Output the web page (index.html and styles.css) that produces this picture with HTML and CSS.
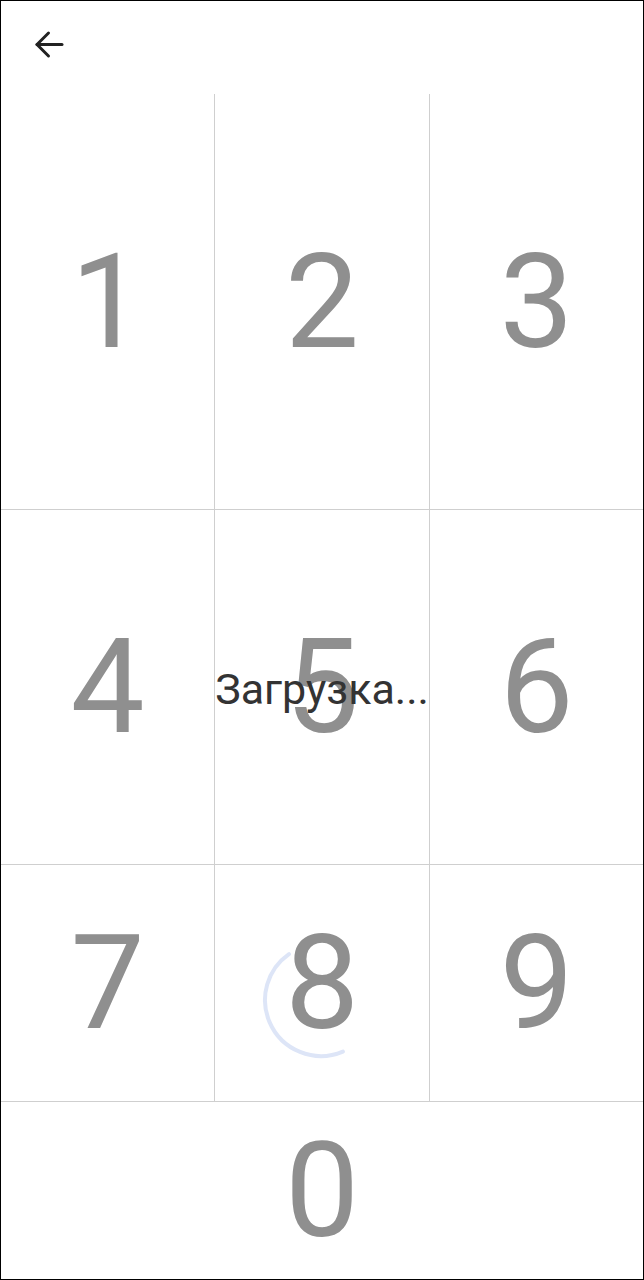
FILE: index.html
```html
<!DOCTYPE html>
<html lang="ru">
<head>
<meta charset="utf-8">
<link rel="stylesheet" href="styles.css">
</head>
<body>
<div class="screen">
  <header class="header">
    <button class="back" aria-label="Назад">
      <svg width="32" height="32" viewBox="0 0 32 32" fill="none" stroke="#222" stroke-width="3" stroke-linecap="round" stroke-linejoin="round">
        <path d="M4 15.5H29"/>
        <path d="M15.5 4L4 15.5L15.5 27"/>
      </svg>
    </button>
  </header>
  <div class="pad">
    <div class="key">1</div>
    <div class="key">2</div>
    <div class="key last">3</div>
    <div class="key">4</div>
    <div class="key">5</div>
    <div class="key last">6</div>
    <div class="key">7</div>
    <div class="key">8</div>
    <div class="key last">9</div>
    <div class="key zero">0</div>
  </div>
  <div class="loading">Загрузка...</div>
  <svg class="spinner" width="124" height="124" viewBox="0 0 124 124">
    <circle cx="62" cy="62" r="56" fill="none" stroke="#dde5f7" stroke-width="4" stroke-linecap="round" stroke-dasharray="164 400" transform="rotate(67 62 62)"/>
  </svg>
</div>
</body>
</html>
```
FILE: styles.css
```css
html, body {
  margin: 0;
  padding: 0;
  background: #fff;
}
.screen {
  position: relative;
  width: 644px;
  height: 1280px;
  box-sizing: border-box;
  border: 1px solid #000;
  display: flex;
  flex-direction: column;
  font-family: Roboto, "Noto Sans", sans-serif;
  overflow: hidden;
}
.header {
  height: 93px;
  flex: none;
  display: flex;
  align-items: flex-start;
}
.back {
  margin: 28px 0 0 32px;
  padding: 0;
  border: none;
  background: none;
  width: 32px;
  height: 32px;
  display: flex;
}
.pad {
  flex: 1;
  display: grid;
  grid-template-columns: 214px 215px 1fr;
  grid-template-rows: 416px 355px 237px 1fr;
}
.key {
  display: flex;
  align-items: center;
  justify-content: center;
  font-size: 132px;
  line-height: 1;
  color: #8f8f8f;
  border-right: 1px solid #cfcfcf;
  border-bottom: 1px solid #cfcfcf;
}
.key.last {
  border-right: none;
}
.key.zero {
  grid-column: 1 / 4;
  border: none;
}
.loading {
  position: absolute;
  left: 0;
  right: 0;
  top: 663px;
  text-align: center;
  font-size: 43px;
  line-height: 50px;
  color: #333;
}
.spinner {
  position: absolute;
  left: 258px;
  top: 937px;
}
```
